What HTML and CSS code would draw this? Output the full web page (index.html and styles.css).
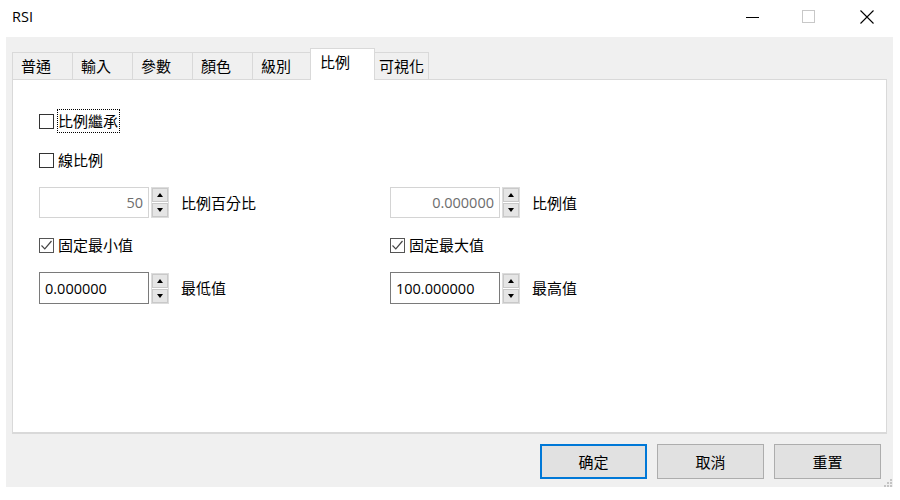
FILE: index.html
```html
<!DOCTYPE html>
<html lang="zh-Hant">
<head>
<meta charset="utf-8">
<title>RSI</title>
<link rel="stylesheet" href="styles.css">
</head>
<body>
<div class="window">
  <div class="titlebar">
    <div class="title">RSI</div>
    <div class="controls">
      <span class="ctl ctl-min"><svg width="14" height="14" viewBox="0 0 14 14"><line x1="0" y1="7.5" x2="13" y2="7.5" stroke="#000" stroke-width="1"/></svg></span>
      <span class="ctl ctl-max"><svg width="14" height="14" viewBox="0 0 14 14"><rect x="0.5" y="0.5" width="12" height="12" fill="none" stroke="#c8c8c8" stroke-width="1"/></svg></span>
      <span class="ctl ctl-close"><svg width="14" height="14" viewBox="0 0 14 14"><path d="M0.5 0.5 L13.5 13.5 M13.5 0.5 L0.5 13.5" stroke="#000" stroke-width="1.1"/></svg></span>
    </div>
  </div>
  <div class="client">
    <div class="tabs">
      <div class="tab">普通</div>
      <div class="tab">輸入</div>
      <div class="tab">參數</div>
      <div class="tab">顏色</div>
      <div class="tab">級別</div>
      <div class="tab active">比例</div>
      <div class="tab wide">可視化</div>
    </div>
    <div class="panel">
      <div class="form">
        <label class="check full"><span class="box"></span><span class="focus">比例繼承</span></label>
        <label class="check full"><span class="box"></span><span class="lbl">線比例</span></label>

        <div class="field">
          <div class="input disabled right">50</div>
          <div class="spin"><span class="sb"><i class="up"></i></span><span class="sb"><i class="down"></i></span></div>
          <span class="flabel">比例百分比</span>
        </div>
        <div class="field">
          <div class="input disabled right">0.000000</div>
          <div class="spin"><span class="sb"><i class="up"></i></span><span class="sb"><i class="down"></i></span></div>
          <span class="flabel">比例值</span>
        </div>

        <label class="check"><span class="box checked"><svg width="13" height="13" viewBox="0 0 13 13"><path d="M1.5 6.5 L4.8 9.8 L11.5 2" fill="none" stroke="#444" stroke-width="1.2"/></svg></span><span class="lbl">固定最小值</span></label>
        <label class="check"><span class="box checked"><svg width="13" height="13" viewBox="0 0 13 13"><path d="M1.5 6.5 L4.8 9.8 L11.5 2" fill="none" stroke="#444" stroke-width="1.2"/></svg></span><span class="lbl">固定最大值</span></label>

        <div class="field">
          <div class="input">0.000000</div>
          <div class="spin"><span class="sb"><i class="up"></i></span><span class="sb"><i class="down"></i></span></div>
          <span class="flabel">最低值</span>
        </div>
        <div class="field">
          <div class="input">100.000000</div>
          <div class="spin"><span class="sb"><i class="up"></i></span><span class="sb"><i class="down"></i></span></div>
          <span class="flabel">最高值</span>
        </div>
      </div>
    </div>
    <div class="footer">
      <button class="btn default">确定</button>
      <button class="btn">取消</button>
      <button class="btn">重置</button>
    </div>
    <svg class="grip" width="9" height="9" viewBox="0 0 9 9">
      <rect x="7" y="1" width="2" height="2" fill="#c4c4c4"/>
      <rect x="4" y="4" width="2" height="2" fill="#c4c4c4"/>
      <rect x="7" y="4" width="2" height="2" fill="#c4c4c4"/>
      <rect x="1" y="7" width="2" height="2" fill="#c4c4c4"/>
      <rect x="4" y="7" width="2" height="2" fill="#c4c4c4"/>
      <rect x="7" y="7" width="2" height="2" fill="#c4c4c4"/>
    </svg>
  </div>
</div>
</body>
</html>
```

FILE: styles.css
```css
* { box-sizing: border-box; }

html, body {
  margin: 0;
  padding: 0;
  background: #ffffff;
}

body {
  font-family: "Open Sans", "Noto Sans CJK TC", sans-serif;
  font-size: 14.5px;
  color: #000;
  width: 900px;
  height: 500px;
  overflow: hidden;
}

.window {
  width: 900px;
  height: 500px;
}

.titlebar {
  height: 37px;
  display: flex;
  align-items: center;
  justify-content: space-between;
}

.title {
  padding-left: 12px;
  font-size: 14.5px;
  line-height: 20px;
  margin-top: -3px;
}

.controls {
  display: flex;
  align-items: center;
  margin-right: 26px;
  margin-top: -4px;
}

.ctl {
  display: flex;
  width: 14px;
  height: 14px;
}

.ctl-min { margin-right: 42px; margin-left: 2px; }
.ctl-max { margin-right: 44px; }

.client {
  position: relative;
  margin-left: 6px;
  width: 887px;
  height: 450px;
  background: #f0f0f0;
  padding-top: 11px;
}

.tabs {
  display: flex;
  align-items: flex-end;
  margin-left: 6px;
  height: 31px;
}

.tab {
  height: 27px;
  width: 61px;
  margin-right: -1px;
  border: 1px solid #d9d9d9;
  border-bottom: none;
  background: #f0f0f0;
  padding-left: 8px;
  line-height: 25px;
  font-family: "Noto Sans CJK TC", sans-serif;
  font-size: 15px;
}

.tab.active {
  position: relative;
  z-index: 2;
  height: 32px;
  width: 65px;
  margin-left: -2px;
  margin-right: -2px;
  margin-bottom: -1px;
  background: #fff;
  padding-left: 9px;
  line-height: 26px;
}

.tab.wide {
  width: 56px;
  padding-left: 5px;
}

.panel {
  position: relative;
  z-index: 1;
  margin-left: 6px;
  width: 875px;
  height: 355px;
  background: #fff;
  border: 1px solid #d9d9d9;
  border-bottom-width: 2px;
  padding-top: 29px;
  padding-left: 26px;
}

.form {
  display: grid;
  grid-template-columns: 351px auto;
  grid-template-rows: 24px 24px 31px 24px 32px;
  row-gap: 15px;
}

.check {
  display: flex;
  align-items: center;
  font-family: "Noto Sans CJK TC", sans-serif;
  font-size: 15px;
  line-height: 20px;
}

.check.full {
  grid-column: 1 / 3;
}

.box {
  width: 15px;
  height: 15px;
  border: 1px solid #333;
  background: #fff;
  display: flex;
  align-items: center;
  justify-content: center;
  margin-right: 4px;
}

.box.checked {
  border-color: #555;
}

.box svg { display: block; }

.focus {
  border: 1px dotted #000;
  padding: 1px 1px 1px 0;
  margin-left: -1px;
  line-height: 20px;
}

.lbl {
  line-height: 20px;
}

.field {
  display: flex;
  align-items: center;
}

.input {
  width: 110px;
  height: 100%;
  border: 1px solid #7a7a7a;
  background: #fff;
  display: flex;
  align-items: center;
  padding: 0 5px;
  font-size: 14.5px;
  color: #000;
}

.input.disabled {
  border-color: #d4d4d4;
  color: #6d6d6d;
}

.input.right {
  justify-content: flex-end;
}

.spin {
  width: 18px;
  height: 31px;
  margin-left: 2px;
  display: flex;
  flex-direction: column;
  gap: 1px;
  border: 1px solid #dcdcdc;
  background: #fff;
}

.sb {
  flex: 1;
  background: #e5e5e5;
  border: 1px solid #c9c9c9;
  display: flex;
  align-items: center;
  justify-content: center;
}

.sb i {
  width: 0;
  height: 0;
  border-left: 3.5px solid transparent;
  border-right: 3.5px solid transparent;
}

.sb i.up { border-bottom: 4px solid #000; }
.sb i.down { border-top: 4px solid #000; }

.flabel {
  margin-left: 12px;
  font-family: "Noto Sans CJK TC", sans-serif;
  font-size: 15px;
  line-height: 20px;
}

.footer {
  display: flex;
  justify-content: flex-end;
  gap: 10px;
  margin-top: 10px;
  padding-right: 12px;
}

.btn {
  width: 107px;
  height: 35px;
  background: #e1e1e1;
  border: 1px solid #adadad;
  font-family: "Noto Sans CJK TC", sans-serif;
  font-size: 15px;
  color: #000;
  padding: 0;
  margin: 0;
}

.btn.default {
  border: 2px solid #0078d7;
}

.grip {
  position: absolute;
  right: 1px;
  bottom: 0;
}
```
